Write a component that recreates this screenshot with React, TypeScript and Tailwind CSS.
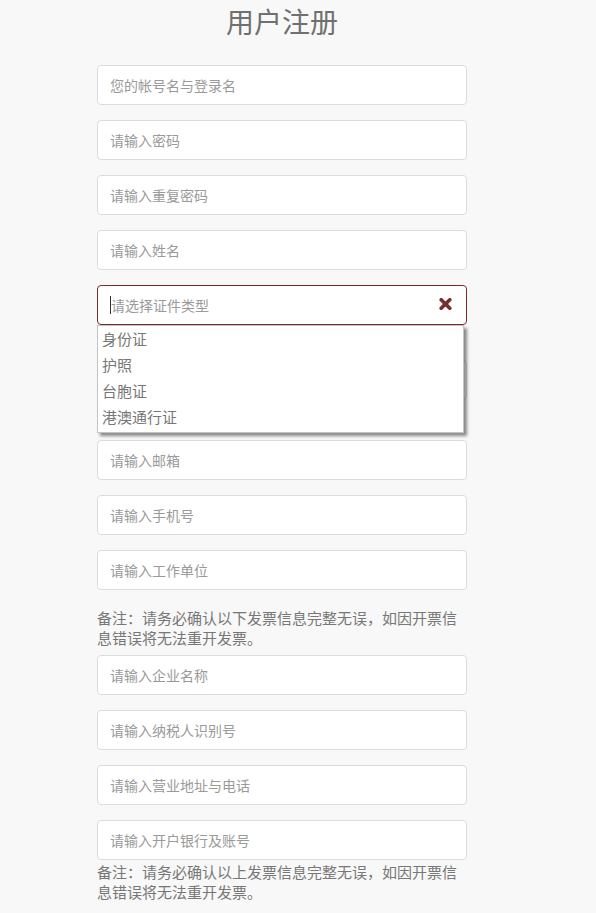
const font = { fontFamily: '"Noto Sans CJK SC", "Noto Sans", sans-serif' }

const FIELD = 'h-10 w-full rounded-[4px] border border-[#dcdcdc] bg-white px-3 text-[14px] text-[#555] outline-none placeholder:text-[#9a9a9a]'

const TextField = ({ placeholder, className = '' }: { placeholder: string; className?: string }) => (
  <input placeholder={placeholder} className={`${FIELD} ${className}`} readOnly />
)

const Note = ({ text, className = '' }: { text: string; className?: string }) => (
  <p className={`text-[15px] leading-[20px] text-[#777] ${className}`}>{text}</p>
)

const ID_TYPES = ['身份证', '护照', '台胞证', '港澳通行证']

const IdTypeSelect = () => (
  <div className="relative mt-[15px]">
    <div className="flex h-10 w-full items-center rounded-[4px] border border-[#7a2a2a] bg-white pl-3 pr-[14px]">
      <span className="h-[18px] w-px bg-[#333]" />
      <span className="flex-1 text-[14px] text-[#9a9a9a]">请选择证件类型</span>
      <svg width="13" height="12" viewBox="0 0 13 12" className="mt-[-3px]">
        <path d="M2.2 1.7 L10.8 10.3 M10.8 1.7 L2.2 10.3" stroke="#7a2c2c" strokeWidth="3.6" strokeLinecap="round" />
      </svg>
    </div>
    <ul className="absolute left-0 top-full z-10 w-[367px] border border-[#c4c4c4] bg-white pb-[2px] shadow-[3px_3px_3px_rgba(0,0,0,0.45)]">
      {ID_TYPES.map((t) => (
        <li key={t} className="h-[26px] pl-[4px] text-[15px] leading-[26px] text-[#777]">
          {t}
        </li>
      ))}
    </ul>
  </div>
)

export default function App() {
  return (
    <div className="min-h-[913px] bg-[#f8f8f8]" style={font}>
      <div className="ml-[97px] w-[370px] pb-6">
        <h1 className="text-center text-[28px] leading-[42px] text-[#707070]">用户注册</h1>

        <div className="mt-[23px] flex flex-col gap-[15px]">
          <TextField placeholder="您的帐号名与登录名" />
          <TextField placeholder="请输入密码" />
          <TextField placeholder="请输入重复密码" />
          <TextField placeholder="请输入姓名" />
        </div>

        <IdTypeSelect />

        <TextField placeholder="请输入证件号码" className="mt-[35px] border-[#7a2a2a]" />

        <div className="mt-10 flex flex-col gap-[15px]">
          <TextField placeholder="请输入邮箱" />
          <TextField placeholder="请输入手机号" />
          <TextField placeholder="请输入工作单位" />
        </div>

        <Note className="mt-[18px]" text="备注：请务必确认以下发票信息完整无误，如因开票信息错误将无法重开发票。" />

        <div className="mt-[7px] flex flex-col gap-[15px]">
          <TextField placeholder="请输入企业名称" />
          <TextField placeholder="请输入纳税人识别号" />
          <TextField placeholder="请输入营业地址与电话" />
          <TextField placeholder="请输入开户银行及账号" />
        </div>

        <Note className="mt-[2px]" text="备注：请务必确认以上发票信息完整无误，如因开票信息错误将无法重开发票。" />
      </div>
    </div>
  )
}
